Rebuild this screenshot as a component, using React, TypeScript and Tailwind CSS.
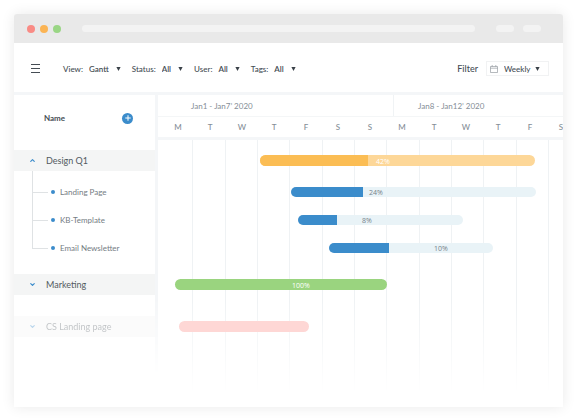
/**
 * ProjectTimeline - Gantt view of the team's projects
 *
 * Task tree on the left, weekly timeline on the right.
 */

import React, { useState } from 'react';
import { ChevronDown, ChevronUp, Plus } from 'lucide-react';

// =============================================================================
// TYPES & DATA
// =============================================================================

interface BarData {
  // All values are in timeline units, see TIMELINE_WIDTH
  start: number;
  end: number;
  split?: number;
  labelAt?: number;
  label?: string;
  track: string;
  fill?: string;
  labelColor?: string;
}

interface Task {
  name: string;
  bar: BarData;
}

interface Group extends Task {
  tasks: Task[];
  faded?: boolean;
}

const TIMELINE_WIDTH = 405;

const DAYS = ['M', 'T', 'W', 'T', 'F', 'S', 'S', 'M', 'T', 'W', 'T', 'F', 'S'];

const blue = { track: 'bg-[#e9f3f7]', fill: 'bg-[#3b8ccb]', labelColor: 'text-[#75828a]' };

const GROUPS: Group[] = [
  {
    name: 'Design Q1',
    bar: {
      start: 102,
      end: 377,
      split: 210,
      labelAt: 218,
      label: '42%',
      track: 'bg-[#fdd798]',
      fill: 'bg-[#fbbd54]',
      labelColor: 'text-white',
    },
    tasks: [
      { name: 'Landing Page', bar: { start: 133, end: 378, split: 205, labelAt: 211, label: '24%', ...blue } },
      { name: 'KB-Template', bar: { start: 140, end: 305, split: 179, labelAt: 204, label: '8%', ...blue } },
      { name: 'Email Newsletter', bar: { start: 171, end: 335, split: 231, labelAt: 276, label: '10%', ...blue } },
    ],
  },
  {
    name: 'Marketing',
    bar: { start: 17, end: 229, labelAt: 134, label: '100%', track: 'bg-[#9ad47f]', labelColor: 'text-white' },
    tasks: [],
  },
  {
    name: 'CS Landing page',
    bar: { start: 21, end: 151, track: 'bg-[#fed7d5]' },
    tasks: [],
    faded: true,
  },
];

const percent = (value: number, total: number) => `${(value / total) * 100}%`;

// =============================================================================
// TOOLBAR
// =============================================================================

const Caret: React.FC = () => (
  <svg viewBox="0 0 5 4" className="pointer-events-none h-1 w-[5px] shrink-0 fill-[#3a4148]" aria-hidden="true">
    <path d="M.4 0h4.2L2.5 4z" />
  </svg>
);

const FilterSelect: React.FC<{ label: string; options: string[] }> = ({ label, options }) => (
  <label className="flex items-center">
    <span className="mr-1.5">{label}:</span>
    <select className="field-sizing-content mr-[7px] appearance-none bg-transparent font-semibold outline-none">
      {options.map((option) => (
        <option key={option}>{option}</option>
      ))}
    </select>
    <Caret />
  </label>
);

const Toolbar: React.FC = () => (
  <div className="flex h-[49px] items-center pt-0.5 pr-[14px] pl-[17px] text-[8px] font-medium text-[#454d54]">
    <button aria-label="Menu" className="mr-[23px] flex w-[9px] flex-col gap-[3px]">
      <span className="h-px w-full bg-[#454d54]" />
      <span className="h-px w-full bg-[#454d54]" />
      <span className="h-px w-full bg-[#454d54]" />
    </button>
    <div className="flex flex-1 gap-[11px]">
      <FilterSelect label="View" options={['Gantt', 'Board', 'List']} />
      <FilterSelect label="Status" options={['All', 'Open', 'Done']} />
      <FilterSelect label="User" options={['All', 'Me']} />
      <FilterSelect label="Tags" options={['All', 'None']} />
    </div>
    <label htmlFor="period" className="mr-2 text-[9px]">
      Filter
    </label>
    <div className="flex h-[15px] w-[63px] items-center border border-[#f1f2f3] pl-[3px]">
      <svg viewBox="0 0 8 8" className="mr-1.5 size-2 shrink-0 fill-none stroke-[#858c92]" aria-hidden="true">
        <path d="M.5 1.5h7v6h-7zM.5 3.2h7M2.2 0v1.5M5.8 0v1.5" strokeWidth="0.6" />
      </svg>
      <select
        id="period"
        className="field-sizing-content mr-1 appearance-none bg-transparent text-[8px] outline-none"
      >
        <option>Weekly</option>
        <option>Monthly</option>
      </select>
      <Caret />
    </div>
  </div>
);

// =============================================================================
// TASK TREE
// =============================================================================

interface TreeProps {
  open: Record<string, boolean>;
  onToggle: (name: string) => void;
}

const TaskTree: React.FC<TreeProps> = ({ open, onToggle }) => (
  <div className="w-[141px] shrink-0">
    <div className="flex h-[55px] items-center justify-between pr-[22px] pb-[9px] pl-[30px]">
      <h2 className="text-[8px] font-bold text-[#454d54]">Name</h2>
      <button aria-label="Add task" className="flex size-[11px] items-center justify-center rounded-full bg-[#3b8ccb]">
        <Plus className="size-2 text-white" strokeWidth={3} />
      </button>
    </div>
    <div className="flex flex-col">
      {GROUPS.map((group) => (
        <div key={group.name} className={group.faded ? 'mt-[21px] opacity-35' : ''}>
          <button
            onClick={() => onToggle(group.name)}
            aria-expanded={!!open[group.name]}
            className="flex h-[21px] w-full items-center bg-[#f4f5f5] pl-[15px] text-[9px] text-[#525a61]"
          >
            {open[group.name] ? (
              <ChevronUp className="mr-[10px] size-[7px] text-[#3b8ccb]" strokeWidth={4} />
            ) : (
              <ChevronDown className="mr-[10px] size-[7px] text-[#3b8ccb]" strokeWidth={4} />
            )}
            {group.name}
          </button>
          {open[group.name] && group.tasks.length > 0 && (
            <ul className="relative pt-[7px] pb-3 pl-[18px] before:absolute before:top-0 before:h-[77px] before:w-px before:bg-[#dfe2e4]">
              {group.tasks.map((task) => (
                <li key={task.name} className="flex h-7 items-center text-[8px] text-[#747c83]">
                  <span className="mr-[3px] h-px w-4 bg-[#dfe2e4]" />
                  <span className="mr-[5px] size-1 rounded-full bg-[#3b8ccb]" />
                  {task.name}
                </li>
              ))}
            </ul>
          )}
        </div>
      ))}
    </div>
  </div>
);

// =============================================================================
// TIMELINE
// =============================================================================

const Bar: React.FC<{ bar: BarData; height: string }> = ({ bar, height }) => {
  const width = bar.end - bar.start;
  return (
    <div
      className={`relative ${height} ${bar.track} overflow-hidden rounded-full`}
      style={{ marginLeft: percent(bar.start, TIMELINE_WIDTH), width: percent(width, TIMELINE_WIDTH) }}
    >
      {bar.split && (
        <div className={`h-full ${bar.fill}`} style={{ width: percent(bar.split - bar.start, width) }} />
      )}
      {bar.label && bar.labelAt && (
        <span
          className={`absolute inset-y-0 flex items-center pt-px font-['Open_Sans',sans-serif] text-[7px] leading-none ${bar.labelColor}`}
          style={{ left: percent(bar.labelAt - bar.start, width) }}
        >
          {bar.label}
        </span>
      )}
    </div>
  );
};

const Timeline: React.FC<{ open: Record<string, boolean> }> = ({ open }) => (
  <div className="flex min-w-0 flex-1 flex-col">
    <div className="grid h-[22px] grid-cols-[235fr_170fr] items-stretch border-b border-[#f4f6f7] text-[8px] text-[#848e96]">
      <div className="flex items-center pl-[33px]">Jan1 - Jan7’ 2020</div>
      <div className="flex items-center border-l border-[#f0f3f5] pl-6">Jan8 - Jan12’ 2020</div>
    </div>
    <div className="grid h-[20px] grid-cols-[repeat(12,32fr)_17fr] items-center pl-1 text-center text-[8px] font-medium text-[#848e96]">
      {DAYS.map((day, i) => (
        <span key={i} className="last:text-right">
          {day}
        </span>
      ))}
    </div>
    <div className="h-[3px] bg-[#f4f6f8]" />

    <div className="relative flex-1 pt-[10px]">
      {/* Day lines, fading out towards the bottom */}
      <div className="absolute inset-0 grid grid-cols-[35fr_repeat(11,32fr)_14fr] mask-b-from-60% mask-b-to-95%">
        {DAYS.map((_, i) => (
          <div key={i} className="border-r border-[#eff2f4] last:border-r-0" />
        ))}
      </div>
      <div className="relative">
        {GROUPS.map((group) => (
          <div key={group.name} className={group.faded ? 'mt-[21px]' : ''}>
            <div className="flex h-[21px] items-center">
              <Bar bar={group.bar} height="h-[11px]" />
            </div>
            {open[group.name] && group.tasks.length > 0 && (
              <div className="pt-[7px] pb-3">
                {group.tasks.map((task) => (
                  <div key={task.name} className="flex h-7 items-center">
                    <Bar bar={task.bar} height="h-[10px]" />
                  </div>
                ))}
              </div>
            )}
          </div>
        ))}
      </div>
    </div>
  </div>
);

// =============================================================================
// APP
// =============================================================================

const App: React.FC = () => {
  const [open, setOpen] = useState<Record<string, boolean>>({ 'Design Q1': true });

  const toggle = (name: string) => setOpen((prev) => ({ ...prev, [name]: !prev[name] }));

  return (
    <div className="bg-white p-[14px] pb-3 font-['Lato','Liberation_Sans',sans-serif]">
      <main className="overflow-hidden rounded-t-[3px] bg-white shadow-[0_0_14px_rgba(0,0,0,0.09)]">
        {/* Browser chrome */}
        <div className="flex h-[29px] items-center bg-[#e9e9e9] pr-[22px] pl-[13px]">
          <div className="mr-[21px] flex gap-[5px]">
            <span className="size-2 rounded-full bg-[#f98b85]" />
            <span className="size-2 rounded-full bg-[#fbb454]" />
            <span className="size-2 rounded-full bg-[#9ad685]" />
          </div>
          <div className="mr-[21px] h-[7px] flex-1 rounded-full bg-[#f3f3f3]" />
          <span className="mr-[9px] h-[7px] w-[18px] rounded-full bg-[#f3f3f3]" />
          <span className="h-[7px] w-[18px] rounded-full bg-[#f3f3f3]" />
        </div>

        <Toolbar />
        <div className="h-[3px] bg-[#f4f6f8]" />

        <div className="flex min-h-[312px]">
          <TaskTree open={open} onToggle={toggle} />
          <div className="w-[3px] shrink-0 bg-[#f4f6f8] mask-b-from-65% mask-b-to-90%" />
          <Timeline open={open} />
        </div>
      </main>
    </div>
  );
};

export default App;
